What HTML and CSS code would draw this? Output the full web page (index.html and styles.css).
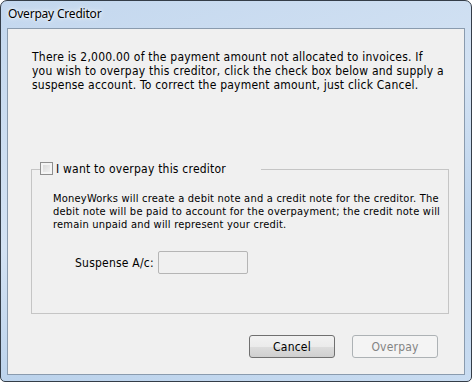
FILE: index.html
```html
<!DOCTYPE html>
<html lang="en">
<head>
  <meta charset="UTF-8">
  <title>Overpay Creditor</title>
  <link rel="stylesheet" href="styles.css">
</head>
<body>
  <div class="window">
    <div class="titlebar">
      <span class="title">Overpay Creditor</span>
    </div>
    <div class="client">
      <p class="message">There is 2,000.00 of the payment amount not allocated to invoices. If<br>you wish to overpay this creditor, click the check box below and supply a<br>suspense account. To correct the payment amount, just click Cancel.</p>

      <fieldset class="group">
        <legend class="group-legend"><span class="checkbox"></span><span class="legend-text">I want to overpay this creditor</span></legend>
        <p class="note">MoneyWorks will create a debit note and a credit note for the creditor. The<br>debit note will be paid to account for the overpayment; the credit note will<br>remain unpaid and will represent your credit.</p>
        <div class="field-row">
          <label class="field-label">Suspense A/c:</label>
          <span class="textbox"></span>
        </div>
      </fieldset>

      <div class="buttons">
        <button class="btn btn-default">Cancel</button>
        <button class="btn" disabled>Overpay</button>
      </div>
    </div>
  </div>
</body>
</html>
```

FILE: styles.css
```css
body {
  margin: 0;
  background: #fff;
}
.window {
  box-sizing: border-box;
  width: 472px;
  height: 382px;
  border: 1px solid #343d48;
  border-radius: 7px 7px 5px 5px;
  background: linear-gradient(160deg, #c3d7ee 0%, #d3e2f3 45%, #bcd3ec 70%, #c9dcf1 100%);
  padding: 0 6px 6px 6px;
  display: flex;
  flex-direction: column;
}
.titlebar {
  height: 27px;
  padding-left: 1px;
  display: flex;
  align-items: center;
}
.title {
  font-family: "Noto Sans", sans-serif;
  font-size: 12px;
  letter-spacing: -0.2px;
  color: #000;
  text-shadow: 0 0 6px #fff, 0 0 3px #fff;
  margin-top: -2px;
}
.client {
  flex: 1;
  border: 1px solid #8a9bae;
  background: #f0f0f0;
  padding-top: 21px;
  font-family: "DejaVu Sans", sans-serif;
  font-stretch: condensed;
  letter-spacing: 0.22px;
  color: #000;
}
.message {
  margin: 0 0 0 24px;
  font-size: 12px;
  line-height: 14px;
  white-space: nowrap;
}
.group {
  box-sizing: border-box;
  width: 409px;
  height: 153px;
  margin: 69px 0 0 23px;
  padding: 0 8px;
  border: 1px solid #c5c5c5;
}
.group-legend {
  padding: 0;
  height: 16px;
  font-size: 12px;
  line-height: 16px;
  white-space: nowrap;
}
.legend-text {
  display: inline-block;
  width: 205px;
}
.checkbox {
  box-sizing: border-box;
  display: inline-block;
  vertical-align: -2px;
  width: 13px;
  height: 13px;
  border: 1px solid #8f8f8f;
  background: linear-gradient(135deg, #d4d4d4, #f6f6f6);
  box-shadow: inset 0 0 0 2px #f4f4f4;
  margin-right: 3px;
}
.note {
  margin: 15px 0 0 13px;
  font-size: 11px;
  line-height: 13px;
  white-space: nowrap;
}
.field-row {
  display: flex;
  align-items: center;
  margin: 20px 0 0 35px;
}
.field-label {
  font-size: 12px;
  width: 83px;
}
.textbox {
  box-sizing: border-box;
  width: 90px;
  height: 23px;
  border: 1px solid #b5b5b5;
  border-radius: 2px;
  background: #f0f0f0;
}
.buttons {
  display: flex;
  justify-content: flex-end;
  gap: 17px;
  margin: 21px 26px 0 0;
}
.btn {
  box-sizing: border-box;
  width: 86px;
  height: 23px;
  padding: 0;
  border: 1px solid #707070;
  border-radius: 3px;
  background: linear-gradient(#f2f2f2 0%, #ebebeb 50%, #dddddd 51%, #cfcfcf 100%);
  font-family: "DejaVu Sans", sans-serif;
  font-stretch: condensed;
  font-size: 12px;
  letter-spacing: 0.2px;
  color: #000;
}
.btn:disabled {
  border-color: #adb2b5;
  background: #f4f4f4;
  color: #838383;
}
```
